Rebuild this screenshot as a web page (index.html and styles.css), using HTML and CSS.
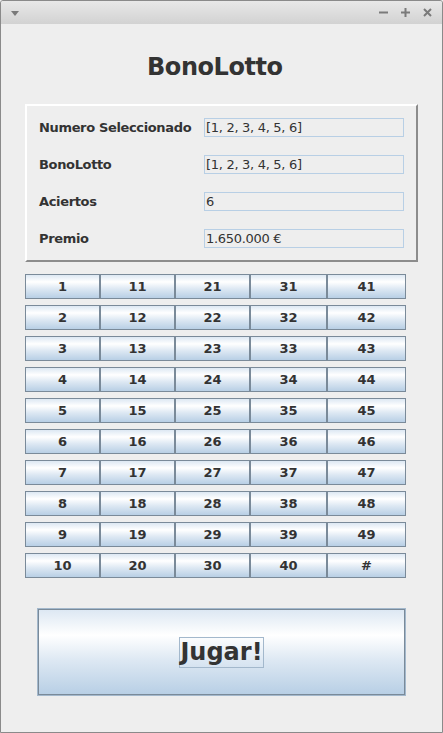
FILE: index.html
```html
<!DOCTYPE html>
<html lang="es">
<head>
<meta charset="utf-8">
<title>BonoLotto</title>
<link rel="stylesheet" href="styles.css">
</head>
<body>
<div class="window">
  <div class="titlebar">
    <svg class="menu-icon" width="8" height="5" viewBox="0 0 8 5"><path d="M0 0H8L4 5Z" fill="#7a7a7a"/></svg>
    <div class="controls">
      <svg width="9" height="9" viewBox="0 0 9 9"><rect x="0" y="3.5" width="9" height="2" fill="#7a7a7a"/></svg>
      <svg width="9" height="9" viewBox="0 0 9 9"><rect x="0" y="3.5" width="9" height="2" fill="#7a7a7a"/><rect x="3.5" y="0" width="2" height="9" fill="#7a7a7a"/></svg>
      <svg width="9" height="9" viewBox="0 0 9 9"><path d="M1 1L8 8M8 1L1 8" stroke="#7a7a7a" stroke-width="2"/></svg>
    </div>
  </div>
  <div class="content">
    <h1 class="title">BonoLotto</h1>
    <div class="panel">
      <div class="row"><span class="label">Numero Seleccionado</span><div class="field">[1, 2, 3, 4, 5, 6]</div></div>
      <div class="row"><span class="label">BonoLotto</span><div class="field">[1, 2, 3, 4, 5, 6]</div></div>
      <div class="row"><span class="label">Aciertos</span><div class="field">6</div></div>
      <div class="row"><span class="label">Premio</span><div class="field">1.650.000 €</div></div>
    </div>
    <div class="numbers">
      <button class="num">1</button><button class="num">2</button><button class="num">3</button><button class="num">4</button><button class="num">5</button><button class="num">6</button><button class="num">7</button><button class="num">8</button><button class="num">9</button><button class="num">10</button>
      <button class="num">11</button><button class="num">12</button><button class="num">13</button><button class="num">14</button><button class="num">15</button><button class="num">16</button><button class="num">17</button><button class="num">18</button><button class="num">19</button><button class="num">20</button>
      <button class="num">21</button><button class="num">22</button><button class="num">23</button><button class="num">24</button><button class="num">25</button><button class="num">26</button><button class="num">27</button><button class="num">28</button><button class="num">29</button><button class="num">30</button>
      <button class="num">31</button><button class="num">32</button><button class="num">33</button><button class="num">34</button><button class="num">35</button><button class="num">36</button><button class="num">37</button><button class="num">38</button><button class="num">39</button><button class="num">40</button>
      <button class="num">41</button><button class="num">42</button><button class="num">43</button><button class="num">44</button><button class="num">45</button><button class="num">46</button><button class="num">47</button><button class="num">48</button><button class="num">49</button><button class="num">#</button>
    </div>
    <button class="play"><span class="focus">Jugar!</span></button>
  </div>
</div>
</body>
</html>
```
FILE: styles.css
```css
* { box-sizing: border-box; }
html, body { margin: 0; padding: 0; background: #eeeeee; }
body { font-family: "DejaVu Sans", sans-serif; color: #333333; }

.window {
  width: 443px;
  height: 733px;
  border: 1px solid #8a8a8a;
  border-radius: 3px 3px 0 0;
  background: #eeeeee;
  display: flex;
  flex-direction: column;
  overflow: hidden;
}

.titlebar {
  height: 23px;
  flex: none;
  background: linear-gradient(#e8e8e8, #d2d2d2);
  display: flex;
  align-items: center;
  padding: 0 10px 0 10px;
}
.menu-icon { margin-top: 2px; }
.controls {
  margin-left: auto;
  display: flex;
  gap: 13px;
  align-items: center;
}

.content {
  flex: 1;
  display: flex;
  flex-direction: column;
  padding-left: 24px;
}

.title {
  margin: 29px 0 0 0;
  padding-left: 122px;
  font-size: 24px;
  letter-spacing: -0.45px;
  line-height: 28px;
  font-weight: bold;
  color: #333333;
}

.panel {
  margin-top: 23px;
  width: 393px;
  border-style: solid;
  border-width: 2px;
  border-color: #ffffff #8c8c8c #8c8c8c #ffffff;
  padding: 12px 12px 12px 12px;
  display: flex;
  flex-direction: column;
  gap: 18px;
}
.row {
  display: grid;
  grid-template-columns: 165px 200px;
  align-items: center;
  height: 19px;
}
.label {
  font-size: 13px;
  font-weight: bold;
  letter-spacing: -0.35px;
  line-height: 19px;
}
.field {
  height: 19px;
  border: 1px solid #b8cfe5;
  padding-left: 1px;
  font-size: 13px;
  letter-spacing: -0.3px;
  line-height: 17px;
  color: #333333;
  white-space: nowrap;
}

.numbers {
  margin-top: 12px;
  display: grid;
  grid-template-columns: 75px 75px 75px 77px 79px;
  grid-template-rows: repeat(10, 25px);
  grid-auto-flow: column;
  row-gap: 6px;
}
.num {
  margin: 0;
  padding: 0;
  border: 1px solid #7a8a99;
  background: linear-gradient(#dde8f3 0%, #ffffff 30%, #dde8f3 60%, #b8cfe5 100%);
  font-family: "DejaVu Sans", sans-serif;
  font-size: 13px;
  font-weight: bold;
  color: #333333;
  line-height: 23px;
}

.play {
  margin: 31px 0 0 13px;
  width: 367px;
  height: 86px;
  padding: 0;
  border: 1px solid #7a8a99;
  box-shadow: 0 0 0 1px #a3b8cc;
  background: linear-gradient(#dde8f3 0%, #ffffff 30%, #dde8f3 60%, #b8cfe5 100%);
  font-family: "DejaVu Sans", sans-serif;
  font-size: 24px;
  font-weight: bold;
  color: #333333;
  display: flex;
  align-items: center;
  justify-content: center;
}
.focus {
  display: inline-block;
  border: 1px solid #a3b8cc;
  line-height: 29px;
  padding: 0;
}
```
